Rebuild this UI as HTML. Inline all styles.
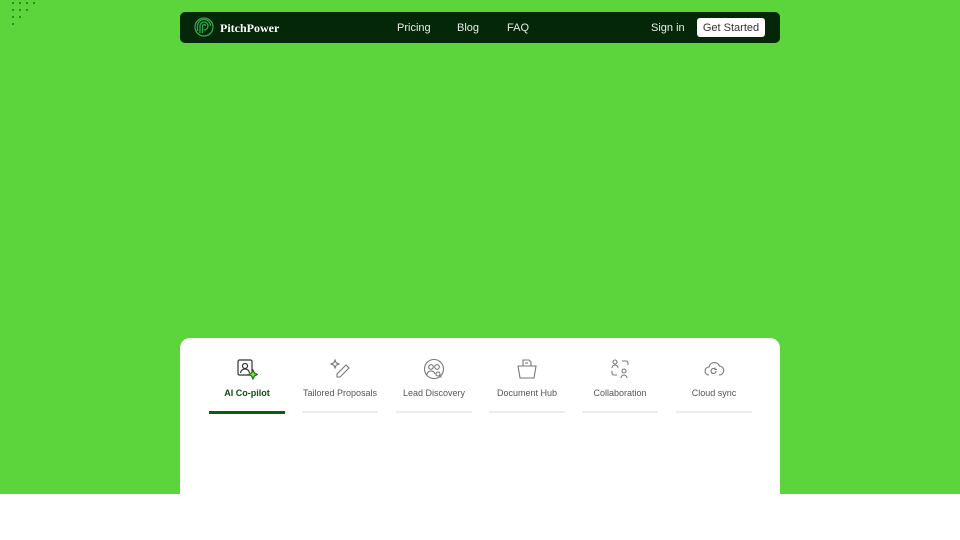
<!DOCTYPE html>
<html><head><meta charset="utf-8"><style>
*{margin:0;padding:0;box-sizing:border-box}
body{width:960px;height:540px;overflow:hidden;background:#fff;font-family:"Liberation Sans",sans-serif;position:relative}
.green{position:absolute;left:0;top:0;width:960px;height:494px;background:#5cd43b}
.dots{position:absolute;left:12px;top:2px}
.dots i{position:absolute;width:2px;height:2px;background:#2e8a22}
nav{position:absolute;left:180px;top:12px;width:600px;height:31px;background:#04270a;border-radius:5px;color:#e6efe6;font-size:11px}
nav .logo{position:absolute;left:14px;top:5px}
nav .brand{position:absolute;left:40px;top:9px;font-family:"Liberation Serif",serif;font-weight:bold;font-size:12px;color:#fff}
nav a{position:absolute;top:10px;color:#e6efe6}
.gs{position:absolute;left:517px;top:6px;width:68px;height:19px;background:#fff;border-radius:3px;color:#333;font-size:11px;text-align:center;line-height:20px}
.panel{position:absolute;left:180px;top:338px;width:600px;height:202px;background:#fff;border-radius:10px 10px 0 0}
.tab{position:absolute;top:20px;width:76px;text-align:center;font-size:9px;color:#555}
.tab svg{display:block;margin:0 auto}
.tab span{display:block;margin-top:8px;white-space:nowrap}
.tab .bar{position:absolute;left:0;top:53px;width:76px;height:2px;background:#ececec}
.tab.on{color:#0f4d14;font-weight:bold}
.tab.on .bar{background:#0f5a14;height:3px}
</style></head><body>
<div class="green"></div>
<div class="dots">
<i style="left:0;top:0"></i><i style="left:7px;top:0"></i><i style="left:14px;top:0"></i><i style="left:21px;top:0"></i>
<i style="left:0;top:7px"></i><i style="left:7px;top:7px"></i><i style="left:14px;top:7px"></i>
<i style="left:0;top:14px"></i><i style="left:7px;top:14px"></i>
<i style="left:0;top:21px"></i>
</div>
<nav>
<svg class="logo" width="20" height="20" viewBox="0 0 20 20" fill="none" stroke="#2fa84a" stroke-width="1.3"><circle cx="10" cy="10" r="9"/><path d="M6 16V9a4 4 0 0 1 8 0a4 4 0 0 1-4 4"/><path d="M8.5 16V9a1.5 1.5 0 0 1 3 0"/><path d="M3.5 14V9a6.5 6.5 0 0 1 13 0"/></svg>
<div class="brand">PitchPower</div>
<a style="left:217px">Pricing</a><a style="left:277px">Blog</a><a style="left:327px">FAQ</a>
<a style="left:471px">Sign in</a>
<div class="gs">Get Started</div>
</nav>
<div class="panel">
<div class="tab on" style="left:29px"><svg width="22" height="22" viewBox="0 0 22 22" fill="none" stroke="#333" stroke-width="1.2"><rect x="2" y="2" width="14" height="15" rx="1.5"/><circle cx="9" cy="8" r="2.5"/><path d="M4.5 15a4.5 4 0 0 1 9 0"/><path d="M17 12l1.5 3 3 1.5-3 1.5-1.5 3-1.5-3-3-1.5 3-1.5z" fill="#7be03b" stroke="#1d6b1d"/></svg><span>AI Co-pilot</span><div class="bar"></div></div>
<div class="tab" style="left:122px"><svg width="22" height="22" viewBox="0 0 22 22" fill="none" stroke="#777" stroke-width="1.1"><path d="M6 2l1.2 2.8L10 6 7.2 7.2 6 10 4.8 7.2 2 6l2.8-1.2z"/><path d="M17 7l3 3-9 9H8v-3z"/></svg><span>Tailored Proposals</span><div class="bar"></div></div>
<div class="tab" style="left:216px"><svg width="22" height="22" viewBox="0 0 22 22" fill="none" stroke="#777" stroke-width="1.1"><circle cx="11" cy="11" r="9.5"/><circle cx="8" cy="9" r="2.3"/><circle cx="14" cy="9" r="2.3"/><path d="M4 17a4 3.5 0 0 1 8-1"/><circle cx="15" cy="16" r="2"/><path d="M16.5 17.5l2 2"/></svg><span>Lead Discovery</span><div class="bar"></div></div>
<div class="tab" style="left:309px"><svg width="22" height="22" viewBox="0 0 22 22" fill="none" stroke="#777" stroke-width="1.1"><path d="M7 8V2h6l2 2v4"/><path d="M9 5h3"/><path d="M2 8h18l-2 12H4z"/></svg><span>Document Hub</span><div class="bar"></div></div>
<div class="tab" style="left:402px"><svg width="22" height="22" viewBox="0 0 22 22" fill="none" stroke="#777" stroke-width="1.1"><circle cx="6" cy="4" r="2"/><path d="M3 10a3 3 0 0 1 6 0"/><circle cx="15" cy="13" r="2"/><path d="M12 20a3 3 0 0 1 6 0"/><path d="M13 3h4a2 2 0 0 1 2 2v2"/><path d="M3 13v2a2 2 0 0 0 2 2h3"/></svg><span>Collaboration</span><div class="bar"></div></div>
<div class="tab" style="left:496px"><svg width="22" height="22" viewBox="0 0 22 22" fill="none" stroke="#777" stroke-width="1.1"><path d="M6 17a4 4 0 0 1 0-8 5.5 5.5 0 0 1 10.5-1A4.5 4.5 0 0 1 16 17"/><path d="M13 13a2.5 2.5 0 1 1-1-2"/><path d="M12 9.5v2h2"/></svg><span>Cloud sync</span><div class="bar"></div></div>
</div>
</body></html>
